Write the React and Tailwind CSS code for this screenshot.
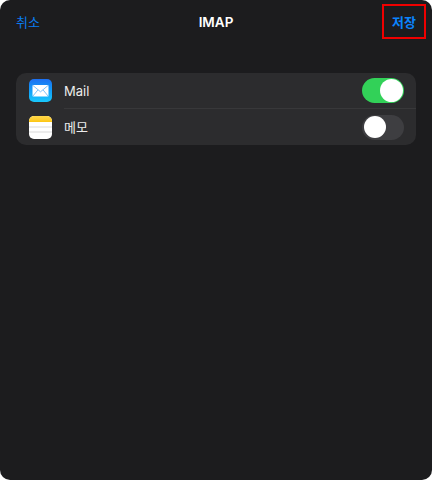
function MailIcon() {
  return (
    <div className="h-[23px] w-[23px] shrink-0 overflow-hidden rounded-[5px] bg-gradient-to-b from-[#1d6ff2] to-[#1ac8fc]">
      <svg viewBox="0 0 23 23" className="h-full w-full">
        <rect x="3.5" y="6" width="16" height="11.5" rx="1" fill="#fff" />
        <path d="M3.8 6.4 11.5 12.8 19.2 6.4M3.8 17.2 9 10.8M19.2 17.2 14 10.8" fill="none" stroke="#7fc2f8" strokeWidth="1" />
      </svg>
    </div>
  );
}

function NotesIcon() {
  return (
    <div className="flex h-[23px] w-[23px] shrink-0 flex-col overflow-hidden rounded-[5px] bg-white">
      <div className="h-[6px] bg-gradient-to-b from-[#ffd84a] to-[#fdc60a]" />
      <div className="mt-[4px] h-[2px] bg-[#ececec]" />
      <div className="mt-[3px] h-[2px] bg-[#ececec]" />
    </div>
  );
}

function Toggle({ on }) {
  return (
    <div className={`flex h-[25px] w-[42px] items-center rounded-full ${on ? "justify-end bg-[#32d158] pr-px" : "justify-start bg-[#3e3e41] pl-[2px]"}`}>
      <div className={`rounded-full bg-white ${on ? "h-[23px] w-[23px]" : "h-[22px] w-[22px]"}`} />
    </div>
  );
}

export default function App() {
  return (
    <div className="h-[480px] w-[432px] overflow-hidden bg-white font-['Inter','Noto_Sans_CJK_KR',sans-serif]">
      <div className="relative h-full rounded-[10px] bg-[#1c1c1e] px-4">
        <header className="flex h-11 items-center justify-between text-[13px]">
          <span className="pt-[2px] text-[#0a7cf0]">취소</span>
          <span className="text-[13.5px] font-semibold text-white">IMAP</span>
          <span className="pt-[2px] font-semibold text-[#0a84ff]">저장</span>
        </header>

        <div className="mt-[29px] rounded-[10px] bg-[#2c2c2e] text-[13px] text-[#ececec]">
          <div className="flex h-[35px] items-center pl-[13px] pr-3">
            <MailIcon />
            <div className="ml-3 flex-1 pt-[3px]">Mail</div>
            <Toggle on />
          </div>
          <div className="ml-12 h-px bg-[#38383a]" />
          <div className="flex h-9 items-center pl-[13px] pr-3">
            <NotesIcon />
            <div className="ml-3 flex-1 pt-[2px]">메모</div>
            <Toggle />
          </div>
        </div>

        <div className="absolute left-[382px] top-1 h-[35px] w-11 border-2 border-[#f00000]" />
      </div>
    </div>
  );
}
